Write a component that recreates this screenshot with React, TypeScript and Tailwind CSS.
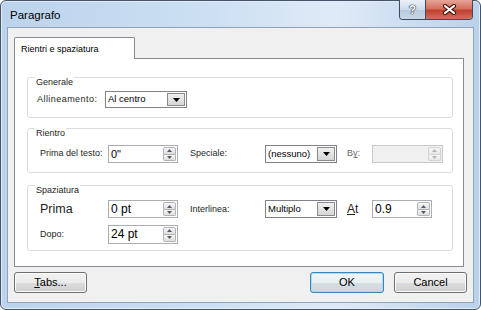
import type React from "react"

const Tri: React.FC<{ up?: boolean; color: string }> = ({ up, color }) => (
  <svg width="5" height="3" viewBox="0 0 5 3">
    <path d={up ? "M0 3L2.5 0L5 3Z" : "M0 0L5 0L2.5 3Z"} fill={color} />
  </svg>
)

// piccoli pulsanti su/giù dentro le caselle numeriche
const Spin: React.FC<{ disabled?: boolean }> = ({ disabled }) => {
  const color = disabled ? "#b4b4b4" : "#4e5d72"
  const half = disabled
    ? "flex-1 flex items-center justify-center border border-[#d4d4d4] bg-[linear-gradient(#f6f6f6,#e8e8e8)]"
    : "flex-1 flex items-center justify-center border border-[#b3b3b3] bg-[linear-gradient(#f7f7f7,#dedede)]"
  return (
    <div className="flex flex-col w-[14px] py-px pr-px">
      <div className={`${half} rounded-t-[2px]`}>
        <Tri up color={color} />
      </div>
      <div className={`${half} border-t-0 rounded-b-[2px]`}>
        <Tri color={color} />
      </div>
    </div>
  )
}

interface SpinBoxProps {
  value?: string
  className: string
  textClass?: string
  disabled?: boolean
}

const SpinBox: React.FC<SpinBoxProps> = ({ value, className, textClass, disabled }) => (
  <div
    className={`flex border ${disabled ? "border-[#c9c9c9] bg-[#f0f0f0]" : "border-[#abadb3] bg-white"} ${className}`}
  >
    <span className={`flex-1 flex items-center pl-[2px] text-black ${textClass ?? "text-[12px]"}`}>{value}</span>
    <Spin disabled={disabled} />
  </div>
)

const Combo: React.FC<{ value: string; className: string }> = ({ value, className }) => (
  <div className={`flex border border-[#7f8289] bg-white ${className}`}>
    <span className="flex-1 flex items-center pl-[2px] text-[9.5px] text-black">{value}</span>
    <div className="w-[18px] m-px flex items-center justify-center border border-[#8a8a8a] bg-[linear-gradient(#efefef,#d6d6d6)]">
      <svg width="7" height="4" viewBox="0 0 7 4">
        <path d="M0 0H7L3.5 4Z" fill="#000" />
      </svg>
    </div>
  </div>
)

const Group: React.FC<{ title: string; className: string; children: React.ReactNode }> = ({
  title,
  className,
  children,
}) => (
  <div className={`relative ml-[12px] mr-[10px] border border-[#dcdcdc] rounded-[3px] ${className}`}>
    <span className="absolute -top-[1px] left-[7px] px-[1px] bg-white text-[9px] leading-[11px] text-[#1e1e1e]">
      {title}
    </span>
    {children}
  </div>
)

const Label: React.FC<{ className: string; children: React.ReactNode }> = ({ className, children }) => (
  <span className={`text-[9px] text-[#1e1e1e] ${className}`}>{children}</span>
)

const Button: React.FC<{ className: string; children: React.ReactNode; primary?: boolean }> = ({
  className,
  children,
  primary,
}) => (
  <div
    className={`h-[21px] flex items-center justify-center rounded-[3px] border text-[11px] text-black ${
      primary
        ? "border-[#3c83b8] shadow-[inset_0_0_0_1px_#a6dcf6] bg-[linear-gradient(#f2f5f7_0%,#e9eef1_50%,#d8e0e6_50%,#cdd5db_100%)]"
        : "border-[#707070] shadow-[inset_0_0_0_1px_#fcfcfc] bg-[linear-gradient(#f2f2f2_0%,#ebebeb_50%,#dddddd_50%,#cfcfcf_100%)]"
    } ${className}`}
  >
    {children}
  </div>
)

export default function App() {
  return (
    <div className="w-[481px] h-[310px] font-['Liberation_Sans',Arial,sans-serif]">
      <div className="w-full h-full flex flex-col border border-[#45546a] rounded-[6px] px-[6px] pb-[6px] bg-[linear-gradient(to_right,#bcd3ed,#cde0f3_45%,#dfeaf7_70%,#bad1eb)] shadow-[inset_0_0_0_1px_#e2edf9]">
        {/* barra del titolo */}
        <div className="h-[26px] flex items-start justify-between">
          <span className="pl-[3px] pt-[8px] text-[11.5px] leading-[13px] text-black">Paragrafo</span>
          <div className="-mt-px mr-px flex h-[20px] border border-t-0 border-[#3d4b5e] rounded-b-[4px] overflow-hidden">
            <div className="w-[26px] flex items-center justify-center border-r border-[#3d4b5e] bg-[linear-gradient(#e9f0f8,#cfdbe9_50%,#b9c9dc_51%,#c9d7e6)]">
              <span className="text-[12px] font-bold leading-none text-[#f4f7fb] [text-shadow:0_0_1px_#2c3a4c,0_0_1px_#2c3a4c,0_0_1px_#2c3a4c]">
                ?
              </span>
            </div>
            <div className="w-[46px] flex items-center justify-center bg-[linear-gradient(#e6a597,#d4705f_45%,#c2402f_55%,#d0705c)]">
              <svg width="15" height="11" viewBox="0 0 15 11">
                <path d="M3 2L12 9M12 2L3 9" stroke="#4a1510" strokeWidth="4.2" strokeLinecap="round" />
                <path d="M3 2L12 9M12 2L3 9" stroke="#fff" strokeWidth="2.2" strokeLinecap="round" />
              </svg>
            </div>
          </div>
        </div>

        {/* area client */}
        <div className="flex-1 flex flex-col bg-[#f0f0f0] border border-[#8fa2b9]">
          <div className="pt-[9px] pl-[6px] flex">
            <div className="relative z-10 -mb-px w-[121px] h-[22px] border border-b-0 border-[#898c95] rounded-t-[2px] bg-white pl-[6px] pt-[6px] text-[9px] leading-[11px] text-black">
              Rientri e spaziatura
            </div>
          </div>

          <div className="ml-[6px] w-[450px] h-[209px] border border-[#898c95] bg-white flex flex-col">
            <Group title="Generale" className="mt-[18px] h-[41px]">
              <div className="flex items-center pl-[9px] pt-[13px]">
                <Label className="w-[68px] tracking-[0.45px]">Allineamento:</Label>
                <Combo value="Al centro" className="w-[82px] h-[17px]" />
              </div>
            </Group>

            <Group title="Rientro" className="mt-[10px] h-[45px]">
              <div className="flex items-center pl-[12px] pt-[16px]">
                <Label className="w-[68px]">Prima del testo:</Label>
                <SpinBox value={'0"'} className="w-[70px] h-[18px]" textClass="text-[11px]" />
                <Label className="ml-[12px] w-[75px]">Speciale:</Label>
                <Combo value="(nessuno)" className="w-[72px] h-[18px]" />
                <Label className="ml-[10px] w-[25px] text-[#666]">
                  B<span className="underline">y</span>:
                </Label>
                <SpinBox disabled className="w-[71px] h-[18px]" />
              </div>
            </Group>

            <Group title="Spaziatura" className="mt-[12px] h-[66px]">
              <div className="flex flex-col gap-[6px] pl-[12px] pt-[14px]">
                <div className="flex items-center">
                  <Label className="w-[68px] !text-[12.5px]">Prima</Label>
                  <SpinBox value="0 pt" className="w-[70px] h-[18px]" />
                  <Label className="ml-[12px] w-[75px]">Interlinea:</Label>
                  <Combo value="Multiplo" className="w-[72px] h-[18px]" />
                  <Label className="ml-[10px] w-[25px] !text-[12px]">
                    <span className="underline">A</span>t
                  </Label>
                  <SpinBox value="0.9" className="w-[60px] h-[18px]" />
                </div>
                <div className="flex items-center">
                  <Label className="w-[68px]">Dopo:</Label>
                  <SpinBox value="24 pt" className="w-[70px] h-[19px]" />
                </div>
              </div>
            </Group>
          </div>

          <div className="mt-[5px] flex items-center px-[6px]">
            <Button className="w-[73px]">
              <span>
                <span className="underline">T</span>abs...
              </span>
            </Button>
            <div className="flex-1" />
            <Button primary className="w-[74px]">
              OK
            </Button>
            <Button className="ml-[10px] w-[73px]">Cancel</Button>
          </div>
        </div>
      </div>
    </div>
  )
}
